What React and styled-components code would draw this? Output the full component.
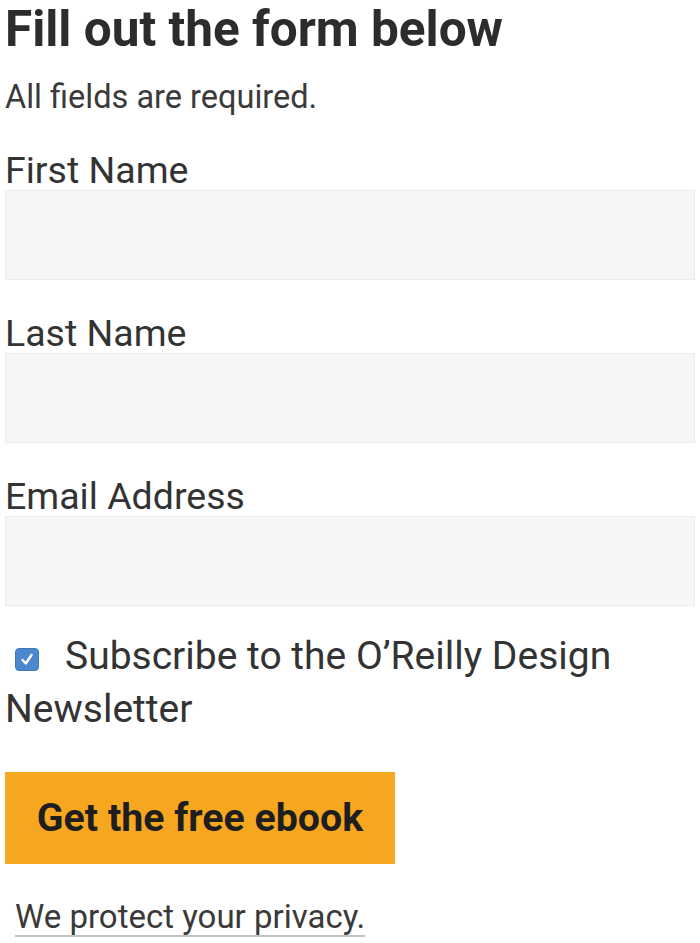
import React from "react";
import styled, { createGlobalStyle } from "styled-components";

const Global = createGlobalStyle`
  html, body { margin: 0; padding: 0; background: #fff; }
  body { font-family: Roboto, "Noto Sans", sans-serif; color: #333; }
`;

const Page = styled.form`
  width: 690px;
  padding: 0 5px;
  display: flex;
  flex-direction: column;
`;

const Title = styled.h1`
  margin: 0;
  font-size: 49.5px;
  font-weight: 700;
  line-height: 58px;
  color: #2c2c2c;
`;

const Note = styled.p`
  margin: 21px 0 0;
  font-size: 32.5px;
  line-height: 36px;
  color: #3a3a3a;
`;

const Field = styled.label`
  display: flex;
  flex-direction: column;
  margin-top: ${(p) => (p.$first ? "35px" : "33px")};
`;

const Label = styled.span`
  font-size: 37.5px;
  line-height: 40px;
  color: #333;
`;

const Input = styled.input`
  margin: 0;
  height: 90px;
  box-sizing: border-box;
  border: 1px solid #ececea;
  background: #f6f6f4;
  outline: none;
  font: inherit;
`;

const Check = styled.label`
  margin-top: 24px;
  font-size: 39px;
  line-height: 53px;
  color: #333;
`;

const Box = styled.span`
  display: inline-block;
  width: 24px;
  height: 23px;
  margin: 0 26px 0 10px;
  vertical-align: -2px;
  box-sizing: border-box;
  border: 1px solid #3f78bd;
  border-radius: 4px;
  background: #4c88ce;
  position: relative;
  svg { position: absolute; left: 3px; top: 2px; }
`;

const Button = styled.button`
  margin-top: 36px;
  align-self: flex-start;
  width: 390px;
  height: 92px;
  padding: 0;
  border: none;
  background: #f6a71f;
  font-family: Roboto, "Noto Sans", sans-serif;
  font-weight: 700;
  font-size: 39.3px;
  color: #1e1e1e;
`;

const Privacy = styled.a`
  margin: 35px 0 0 10px;
  align-self: flex-start;
  font-size: 33px;
  line-height: 36px;
  color: #3a3a3a;
  text-decoration: none;
  border-bottom: 2px solid #c2c2c2;
`;

export default function App() {
  return (
    <>
      <Global />
      <Page onSubmit={(e) => e.preventDefault()}>
        <Title>Fill out the form below</Title>
        <Note>All fields are required.</Note>
        <Field $first>
          <Label>First Name</Label>
          <Input />
        </Field>
        <Field>
          <Label>Last Name</Label>
          <Input />
        </Field>
        <Field>
          <Label>Email Address</Label>
          <Input />
        </Field>
        <Check>
          <Box>
            <svg width="16" height="17" viewBox="0 0 16 17">
              <path d="M3.5 9 L6.8 12.5 L12.5 4" stroke="#fff" strokeWidth="2.4" fill="none" strokeLinecap="round" strokeLinejoin="round" />
            </svg>
          </Box>
          Subscribe to the O’Reilly Design Newsletter
        </Check>
        <Button type="submit">Get the free ebook</Button>
        <Privacy href="#">We protect your privacy.</Privacy>
      </Page>
    </>
  );
}
